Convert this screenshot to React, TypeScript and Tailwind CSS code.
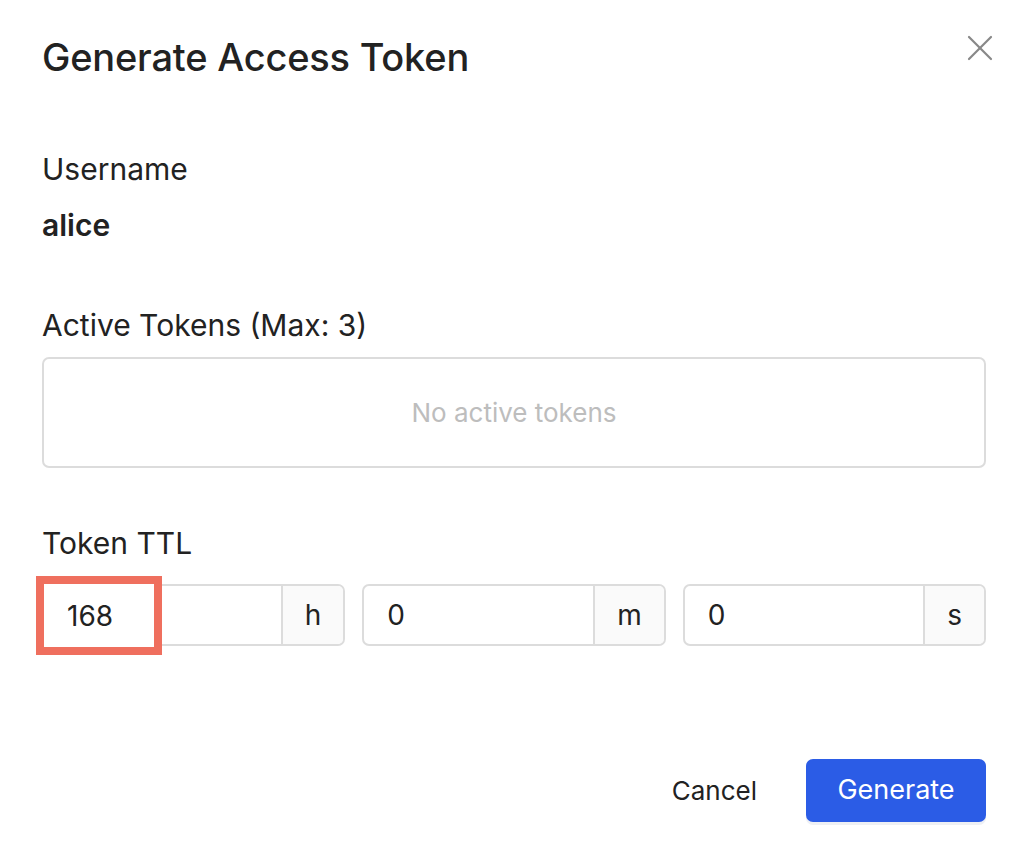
import { X } from 'lucide-react'

function TimeField({ value, unit }: { value: string; unit: string }) {
	return (
		<div className="flex flex-1 h-[62px] rounded-[7px] border-2 border-[#dcdcdc] overflow-hidden">
			<div className="flex-1 flex items-center pl-[23px] text-[28px] text-[#222]">{value}</div>
			<div className="flex items-center px-[22px] bg-[#fafafa] border-l-2 border-[#dcdcdc] text-[28px] text-[#222]">{unit}</div>
		</div>
	)
}

export default function App() {
	return (
		<div className="relative w-[1024px] h-[853px] bg-white pl-[42px] pr-[38px] pt-[35px] font-['Inter','Noto_Sans',sans-serif] text-[#222]">
			{/* Close */}
			<button className="absolute top-[26px] right-[22px] text-[#888]">
				<X size={44} strokeWidth={1.2} />
			</button>

			<h1 className="h-[44px] leading-[44px] text-[38px] font-medium tracking-[-0.2px]">Generate Access Token</h1>

			<div className="mt-[72px] h-[36px] leading-[36px] text-[30px]">Username</div>
			<div className="mt-[20px] h-[36px] leading-[36px] text-[30px] font-semibold">alice</div>

			<div className="mt-[64px] h-[36px] leading-[36px] text-[30px]">Active Tokens (Max: 3)</div>
			<div className="mt-[14px] h-[111px] rounded-[7px] border-2 border-[#dcdcdc] flex items-center justify-center text-[26px] text-[#bdbdbd]">
				No active tokens
			</div>

			<div className="mt-[57px] h-[36px] leading-[36px] text-[30px]">Token TTL</div>
			<div className="relative mt-[23px] flex gap-[17px]">
				<TimeField value="168" unit="h" />
				<TimeField value="0" unit="m" />
				<TimeField value="0" unit="s" />
				{/* highlight */}
				<div className="absolute left-[-6px] top-[-8px] w-[126px] h-[79px] border-[8px] border-[#ef6f5e] bg-white flex items-center pl-[23px] text-[28px]">
					168
				</div>
			</div>

			<div className="mt-[113px] flex justify-end items-center gap-[33px]">
				<button className="h-[63px] px-[16px] text-[26px] text-[#222]">Cancel</button>
				<button className="h-[63px] w-[180px] rounded-[7px] bg-[#2b5ce6] text-white text-[27px] shadow-[0_3px_0_#eef0f4]">Generate</button>
			</div>
		</div>
	)
}
